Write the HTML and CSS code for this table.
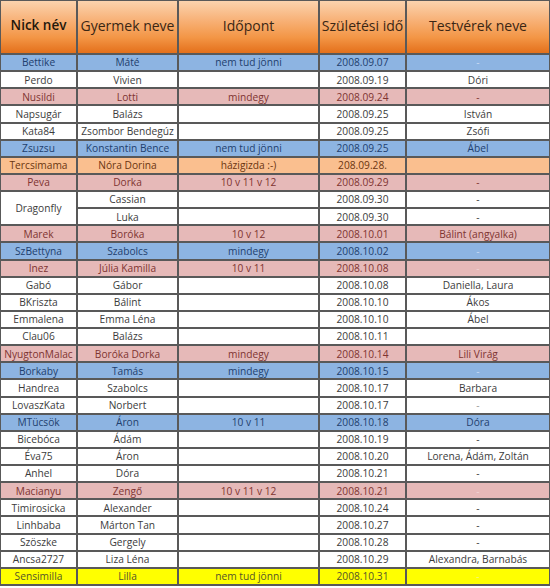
FILE: index.html
```html
<!DOCTYPE html>
<html lang="hu">
<head>
<meta charset="utf-8">
<title>Szülinapos lista</title>
<link rel="stylesheet" href="styles.css">
</head>
<body>
<div class="sheet">
  <div class="row head">
    <div class="c bold">Nick név</div><div class="c">Gyermek neve</div><div class="c">Időpont</div><div class="c">Születési idő</div><div class="c">Testvérek neve</div>
  </div>
  <div class="row blue"><div class="c">Bettike</div><div class="c">Máté</div><div class="c">nem tud jönni</div><div class="c">2008.09.07</div><div class="c dim">-</div></div>
  <div class="row"><div class="c">Perdo</div><div class="c">Vivien</div><div class="c"></div><div class="c">2008.09.19</div><div class="c">Dóri</div></div>
  <div class="row pink"><div class="c">Nusildi</div><div class="c">Lotti</div><div class="c">mindegy</div><div class="c">2008.09.24</div><div class="c">-</div></div>
  <div class="row"><div class="c">Napsugár</div><div class="c">Balázs</div><div class="c"></div><div class="c">2008.09.25</div><div class="c">István</div></div>
  <div class="row"><div class="c">Kata84</div><div class="c">Zsombor Bendegúz</div><div class="c"></div><div class="c">2008.09.25</div><div class="c">Zsófi</div></div>
  <div class="row blue"><div class="c">Zsuzsu</div><div class="c">Konstantin Bence</div><div class="c">nem tud jönni</div><div class="c">2008.09.25</div><div class="c">Ábel</div></div>
  <div class="row orange"><div class="c">Tercsimama</div><div class="c">Nóra Dorina</div><div class="c">házigizda :-)</div><div class="c">208.09.28.</div><div class="c"></div></div>
  <div class="row pink"><div class="c">Peva</div><div class="c">Dorka</div><div class="c">10 v 11 v 12</div><div class="c">2008.09.29</div><div class="c">-</div></div>
  <div class="row"><div class="c span2">Dragonfly</div><div class="c">Cassian</div><div class="c"></div><div class="c">2008.09.30</div><div class="c">-</div></div>
  <div class="row"><div class="c">Luka</div><div class="c"></div><div class="c">2008.09.30</div><div class="c">-</div></div>
  <div class="row pink"><div class="c">Marek</div><div class="c">Boróka</div><div class="c">10 v 12</div><div class="c">2008.10.01</div><div class="c">Bálint (angyalka)</div></div>
  <div class="row blue"><div class="c">SzBettyna</div><div class="c">Szabolcs</div><div class="c">mindegy</div><div class="c">2008.10.02</div><div class="c dim">-</div></div>
  <div class="row pink"><div class="c">Inez</div><div class="c">Júlia Kamilla</div><div class="c">10 v 11</div><div class="c">2008.10.08</div><div class="c dim">-</div></div>
  <div class="row"><div class="c">Gabó</div><div class="c">Gábor</div><div class="c"></div><div class="c">2008.10.08</div><div class="c">Daniella, Laura</div></div>
  <div class="row"><div class="c">BKriszta</div><div class="c">Bálint</div><div class="c"></div><div class="c">2008.10.10</div><div class="c">Ákos</div></div>
  <div class="row"><div class="c">Emmalena</div><div class="c">Emma Léna</div><div class="c"></div><div class="c">2008.10.10</div><div class="c">Ábel</div></div>
  <div class="row"><div class="c">Clau06</div><div class="c">Balázs</div><div class="c"></div><div class="c">2008.10.11</div><div class="c"></div></div>
  <div class="row pink"><div class="c">NyugtonMalac</div><div class="c">Boróka Dorka</div><div class="c">mindegy</div><div class="c">2008.10.14</div><div class="c">Lili Virág</div></div>
  <div class="row blue"><div class="c">Borkaby</div><div class="c">Tamás</div><div class="c">mindegy</div><div class="c">2008.10.15</div><div class="c dim">-</div></div>
  <div class="row"><div class="c">Handrea</div><div class="c">Szabolcs</div><div class="c"></div><div class="c">2008.10.17</div><div class="c">Barbara</div></div>
  <div class="row"><div class="c">LovaszKata</div><div class="c">Norbert</div><div class="c"></div><div class="c">2008.10.17</div><div class="c dim">-</div></div>
  <div class="row blue"><div class="c">MTücsök</div><div class="c">Áron</div><div class="c">10 v 11</div><div class="c">2008.10.18</div><div class="c">Dóra</div></div>
  <div class="row"><div class="c">Bicebóca</div><div class="c">Ádám</div><div class="c"></div><div class="c">2008.10.19</div><div class="c">-</div></div>
  <div class="row"><div class="c">Éva75</div><div class="c">Áron</div><div class="c"></div><div class="c">2008.10.20</div><div class="c">Lorena, Ádám, Zoltán</div></div>
  <div class="row"><div class="c">Anhel</div><div class="c">Dóra</div><div class="c"></div><div class="c">2008.10.21</div><div class="c">-</div></div>
  <div class="row pink"><div class="c">Macianyu</div><div class="c">Zengő</div><div class="c">10 v 11 v 12</div><div class="c">2008.10.21</div><div class="c dim">-</div></div>
  <div class="row"><div class="c">Timirosicka</div><div class="c">Alexander</div><div class="c"></div><div class="c">2008.10.24</div><div class="c">-</div></div>
  <div class="row"><div class="c">Linhbaba</div><div class="c">Márton Tan</div><div class="c"></div><div class="c">2008.10.27</div><div class="c">-</div></div>
  <div class="row"><div class="c">Szöszke</div><div class="c">Gergely</div><div class="c"></div><div class="c">2008.10.28</div><div class="c">-</div></div>
  <div class="row"><div class="c">Ancsa2727</div><div class="c">Liza Léna</div><div class="c"></div><div class="c">2008.10.29</div><div class="c">Alexandra, Barnabás</div></div>
  <div class="row yellow"><div class="c">Sensimilla</div><div class="c">Lilla</div><div class="c">nem tud jönni</div><div class="c">2008.10.31</div><div class="c dim">-</div></div>
</div>
</body>
</html>
```
FILE: styles.css
```css
html, body {
  margin: 0;
  padding: 0;
  background: #ffffff;
}

.sheet {
  width: 550px;
  box-sizing: border-box;
  display: grid;
  grid-template-columns: 75px 99px 139px 85px 142px;
  grid-template-rows: 52px;
  grid-auto-rows: 15.13px;
  column-gap: 2px;
  row-gap: 2px;
  padding: 1px 0 2px 1px;
  background: #595959;
  font-family: "Open Sans", "Liberation Sans", sans-serif;
  font-size: 10.2px;
  color: #3c3c3c;
}

.row {
  display: contents;
}

.c {
  display: flex;
  align-items: center;
  justify-content: center;
  background: #ffffff;
  white-space: nowrap;
  overflow: hidden;
  line-height: 1;
}

.span2 {
  grid-row: span 2;
}

.head .c {
  background: linear-gradient(#fbd3ae 0%, #f8b37a 35%, #f39646 70%, #e4701b 100%);
  font-size: 14px;
  color: #3a2614;
  padding-bottom: 2px;
}

.head .bold {
  font-weight: 600;
  font-size: 13.5px;
  color: #24180c;
}

.blue .c {
  background: #8db4e2;
  color: #1f3f6e;
}

.pink .c {
  background: #e6b9b8;
  color: #7e3431;
}

.orange .c {
  background: #fabf8f;
  color: #6b3510;
}

.yellow .c {
  background: #ffff00;
  color: #55552a;
}

.c.dim {
  color: #9a9a9a;
}

.blue .c.dim {
  color: #c9dbf2;
}

.pink .c.dim {
  color: #f1d4d3;
}

.yellow .c.dim {
  color: #f4f48a;
}
```
